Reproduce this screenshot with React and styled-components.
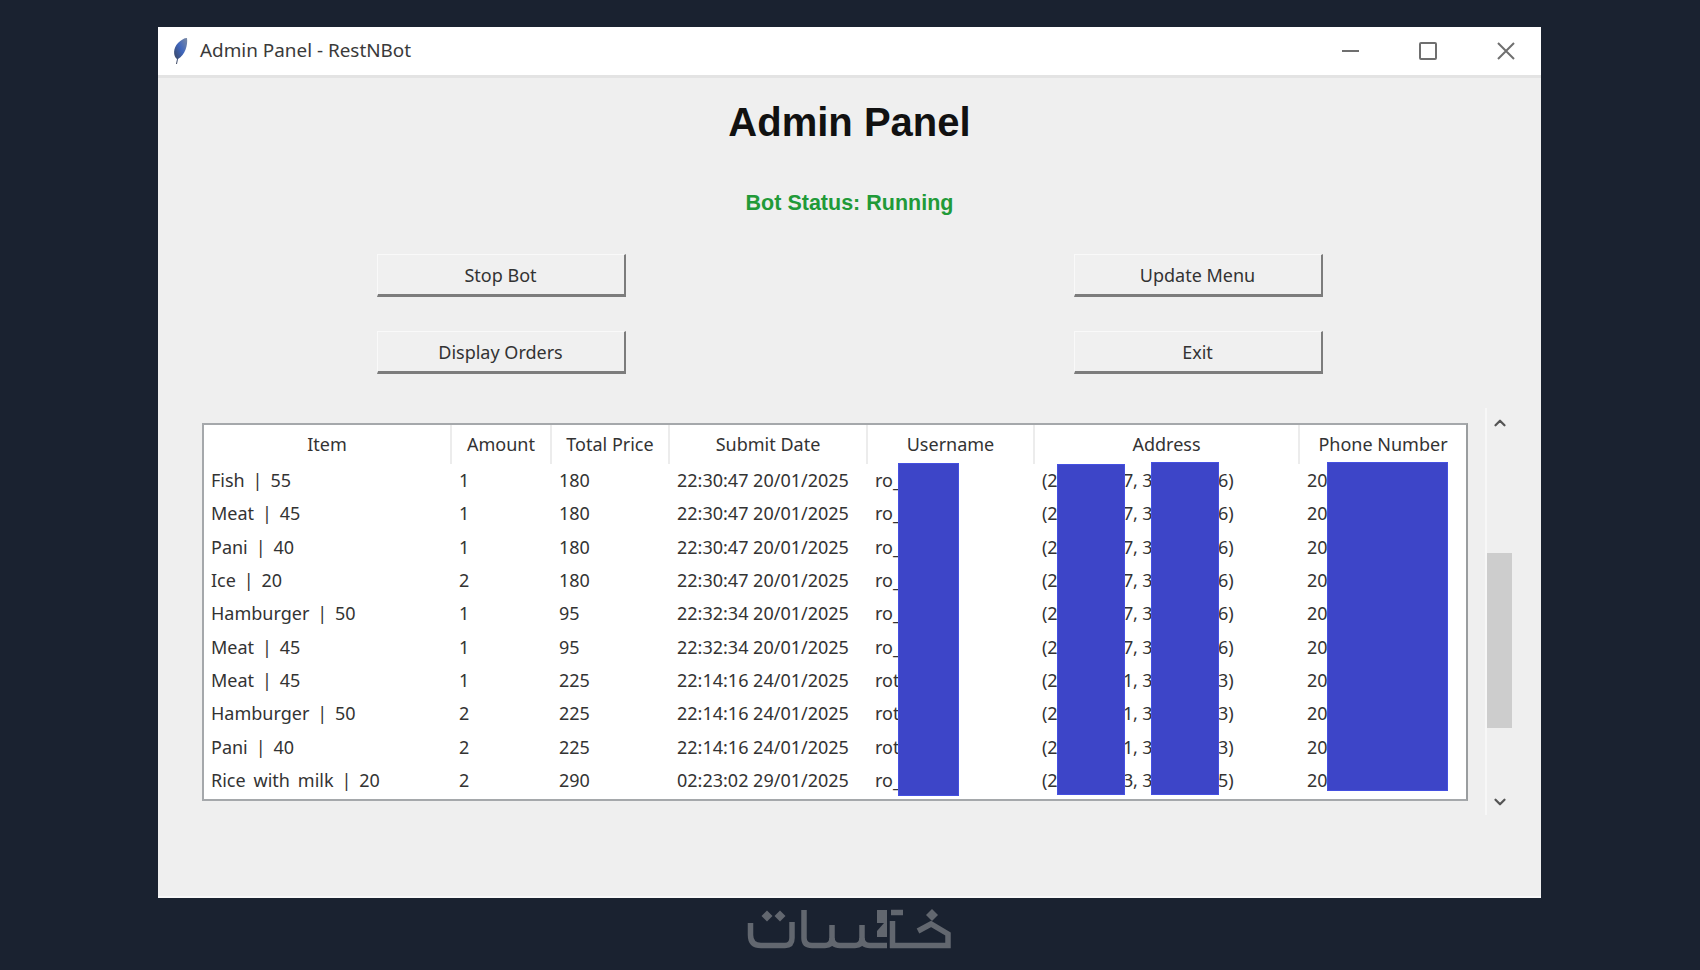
import styled, { createGlobalStyle } from "styled-components";
import { ChevronUp, ChevronDown } from "lucide-react";

const GlobalStyle = createGlobalStyle`
  html, body {
    margin: 0;
    height: 100%;
    background: #1a2230;
  }
  * { box-sizing: border-box; }
`

const Page = styled.div`
  width: 1700px;
  height: 970px;
  overflow: hidden;
  padding: 27px 159px 0 158px;
  display: flex;
  flex-direction: column;
  align-items: stretch;
`
const Window = styled.div`
  height: 871px;
  background: #efefef;
  display: flex;
  flex-direction: column;
  border-bottom: 2px solid #f8f8f8;
  font-family: "Noto Sans", "Open Sans", sans-serif;
  color: #333;
`
const TitleBar = styled.div`
  height: 51px;
  flex: none;
  background: #fff;
  border-bottom: 3px solid #e3e3e3;
  display: flex;
  align-items: center;
  padding-left: 14px;
`
const TitleText = styled.span`
  margin: -2px 0 0 12px;
  font-size: 18.9px;
  color: #3a3a3a;
  flex: 1;
`
const WindowControls = styled.div`
  display: flex;
  align-items: center;
  gap: 60px;
  padding-right: 26px;
  color: #6f6f6f;
`
const Heading = styled.h1`
  margin: 18px 0 0;
  font: bold 40px/52px "Liberation Sans", Arial, sans-serif;
  color: #111;
  text-align: center;
`
const BotStatus = styled.div`
  margin-top: 41px;
  font: bold 21.5px/28px "Liberation Sans", Arial, sans-serif;
  color: #219a38;
  text-align: center;
`
const ButtonGrid = styled.div`
  margin: 37px auto 0;
  width: 946px;
  display: grid;
  grid-template-columns: 249px 249px;
  justify-content: space-between;
  row-gap: 34px;
`
const Button = styled.button`
  height: 43px;
  padding: 0;
  background: #f0f0f0;
  border: 0;
  border-top: 1px solid #f9f9f9;
  border-left: 1px solid #f9f9f9;
  border-right: 2px solid #7c7c7c;
  border-bottom: 3px solid #7c7c7c;
  font: inherit;
  font-size: 18px;
  color: #333;
`
const TableRow = styled.div`
  margin: 49px 0 0 44px;
  display: flex;
  align-items: flex-start;
`
const Table = styled.div`
  position: relative;
  width: 1266px;
  height: 378px;
  background: #fff;
  border: 2px solid #a5a8ab;
  border-right-color: #9a9d9f;
`
const Row = styled.div`
  display: grid;
  grid-template-columns: 248px 100px 118px 198px 167px 265px 1fr;
  height: ${(p) => (p.$head ? "39px" : "33.33px")};
`
const HeadCell = styled.div`
  text-align: center;
  font-size: 18px;
  line-height: 38px;
  white-space: nowrap;
  border-right: 2px solid #ececec;
  &:last-child { border-right: 0; }
`
const Cell = styled.div`
  padding-left: 7px;
  font-size: 18px;
  line-height: 33px;
  white-space: nowrap;
  overflow: hidden;
  word-spacing: ${(p) => (p.$item ? "3.2px" : "0")};
  letter-spacing: ${(p) => (p.$tight ? "-0.15px" : "0")};
`
const Redaction = styled.div`
  position: absolute;
  left: ${(p) => p.$left}px;
  top: ${(p) => p.$top}px;
  width: ${(p) => p.$width}px;
  height: ${(p) => p.$height}px;
  background: #3d45c8;
  border: 1px solid #4550e0;
`
const Scrollbar = styled.div`
  margin: -15px 0 0 17px;
  width: 27px;
  height: 407px;
  position: relative;
  display: flex;
  flex-direction: column;
  align-items: center;
  justify-content: space-between;
  padding: 6px 0 4px;
  border-left: 2px solid #f7f7f7;
  color: #555;
`
const Thumb = styled.div`
  position: absolute;
  left: 0;
  top: 145px;
  width: 25px;
  height: 175px;
  background: #cdcdcd;
`
const Footer = styled.div`
  flex: 1;
  display: flex;
  justify-content: center;
  padding: 7px 0 0 6px;
`

const Feather = () => (
  <svg width="16" height="28" viewBox="0 0 16 28">
    <defs>
      <linearGradient id="feather" x1="0" y1="1" x2="1" y2="0">
        <stop offset="0" stopColor="#3a3f4a" />
        <stop offset="0.55" stopColor="#3f66bd" />
        <stop offset="1" stopColor="#7d8ba3" />
      </linearGradient>
    </defs>
    <path d="M4 27 L5 22 C1 19 1 11 6 6 C9 3 12 1 15 1 C16 8 13 18 6 22 L5 27 Z" fill="url(#feather)" />
  </svg>
)

const Minimize = () => (
  <svg width="17" height="18" viewBox="0 0 17 18">
    <path d="M0 9 H17" stroke="currentColor" strokeWidth="2" />
  </svg>
)
const Maximize = () => (
  <svg width="18" height="18" viewBox="0 0 18 18">
    <rect x="1" y="1" width="16" height="16" rx="1" fill="none" stroke="currentColor" strokeWidth="2" />
  </svg>
)
const Close = () => (
  <svg width="18" height="18" viewBox="0 0 18 18">
    <path d="M1 1 L17 17 M17 1 L1 17" stroke="currentColor" strokeWidth="2" />
  </svg>
)

// coordinates are the page pixels of the logo, hence the viewBox offset
const KhamsatLogo = () => (
  <svg width="215" height="47" viewBox="745 905 215 47">
    <g fill="none" stroke="#62676f" strokeWidth="5.5">
      <path d="M750.5 923 V935 Q750.5 945.5 761 945.5 H785 Q792 945.5 792 938 V922" />
      <path d="M804 910 V938 Q804 945.5 812 945.5 H825 Q832 945.5 832 938 V925" />
      <path d="M832 938 Q832 945.5 840 945.5 H855 Q862 945.5 862 938 V925" />
      <path d="M862 938 Q862 945.5 870 945.5 H887" />
      <path d="M903 912.5 H891" />
      <path d="M892.5 921 V948" />
      <path d="M890 945.5 H948 V934 L931 924 L918 931" />
    </g>
    <g fill="#62676f">
      <polygon points="877,910 887,910 887,937 877,937 877,931 884,923 877,923" />
      <polygon points="767,910.5 772.5,916 767,921.5 761.5,916" />
      <polygon points="780,910.5 785.5,916 780,921.5 774.5,916" />
      <polygon points="932,909 938,915 932,921 926,915" />
    </g>
  </svg>
)

const columns = ["Item", "Amount", "Total Price", "Submit Date", "Username", "Address", "Phone Number"]

// the hidden part of each value sits under the blue redaction blocks
const first = { user: "ro_xxxxx", address: "(27.123457, 31.123456)", phone: "20100000000" }
const second = { user: "rotxxxxx", address: "(27.123451, 31.123453)", phone: "20100000000" }
const third = { user: "ro_xxxxx", address: "(27.123453, 31.123455)", phone: "20100000000" }

const orders = [
  { item: "Fish | 55", amount: 1, total: 180, date: "22:30:47 20/01/2025", ...first },
  { item: "Meat | 45", amount: 1, total: 180, date: "22:30:47 20/01/2025", ...first },
  { item: "Pani | 40", amount: 1, total: 180, date: "22:30:47 20/01/2025", ...first },
  { item: "Ice | 20", amount: 2, total: 180, date: "22:30:47 20/01/2025", ...first },
  { item: "Hamburger | 50", amount: 1, total: 95, date: "22:32:34 20/01/2025", ...first },
  { item: "Meat | 45", amount: 1, total: 95, date: "22:32:34 20/01/2025", ...first },
  { item: "Meat | 45", amount: 1, total: 225, date: "22:14:16 24/01/2025", ...second },
  { item: "Hamburger | 50", amount: 2, total: 225, date: "22:14:16 24/01/2025", ...second },
  { item: "Pani | 40", amount: 2, total: 225, date: "22:14:16 24/01/2025", ...second },
  { item: "Rice with milk | 20", amount: 2, total: 290, date: "02:23:02 29/01/2025", ...third },
]

export default function App() {
  return (
    <Page>
      <GlobalStyle />
      <Window>
        <TitleBar>
          <Feather />
          <TitleText>Admin Panel - RestNBot</TitleText>
          <WindowControls>
            <Minimize />
            <Maximize />
            <Close />
          </WindowControls>
        </TitleBar>
        <Heading>Admin Panel</Heading>
        <BotStatus>Bot Status: Running</BotStatus>
        <ButtonGrid>
          <Button>Stop Bot</Button>
          <Button>Update Menu</Button>
          <Button>Display Orders</Button>
          <Button>Exit</Button>
        </ButtonGrid>
        <TableRow>
          <Table>
            <Row $head>
              {columns.map((name) => <HeadCell key={name}>{name}</HeadCell>)}
            </Row>
            {orders.map((order, index) => (
              <Row key={index}>
                <Cell $item>{order.item}</Cell>
                <Cell>{order.amount}</Cell>
                <Cell>{order.total}</Cell>
                <Cell>{order.date}</Cell>
                <Cell>{order.user}</Cell>
                <Cell $tight>{order.address}</Cell>
                <Cell>{order.phone}</Cell>
              </Row>
            ))}
            <Redaction $left={694} $top={38} $width={61} $height={333} />
            <Redaction $left={853} $top={39} $width={68} $height={331} />
            <Redaction $left={947} $top={37} $width={68} $height={333} />
            <Redaction $left={1123} $top={37} $width={121} $height={329} />
          </Table>
          <Scrollbar>
            <ChevronUp size={18} strokeWidth={3} />
            <Thumb />
            <ChevronDown size={18} strokeWidth={3} />
          </Scrollbar>
        </TableRow>
      </Window>
      <Footer>
        <KhamsatLogo />
      </Footer>
    </Page>
  )
}
